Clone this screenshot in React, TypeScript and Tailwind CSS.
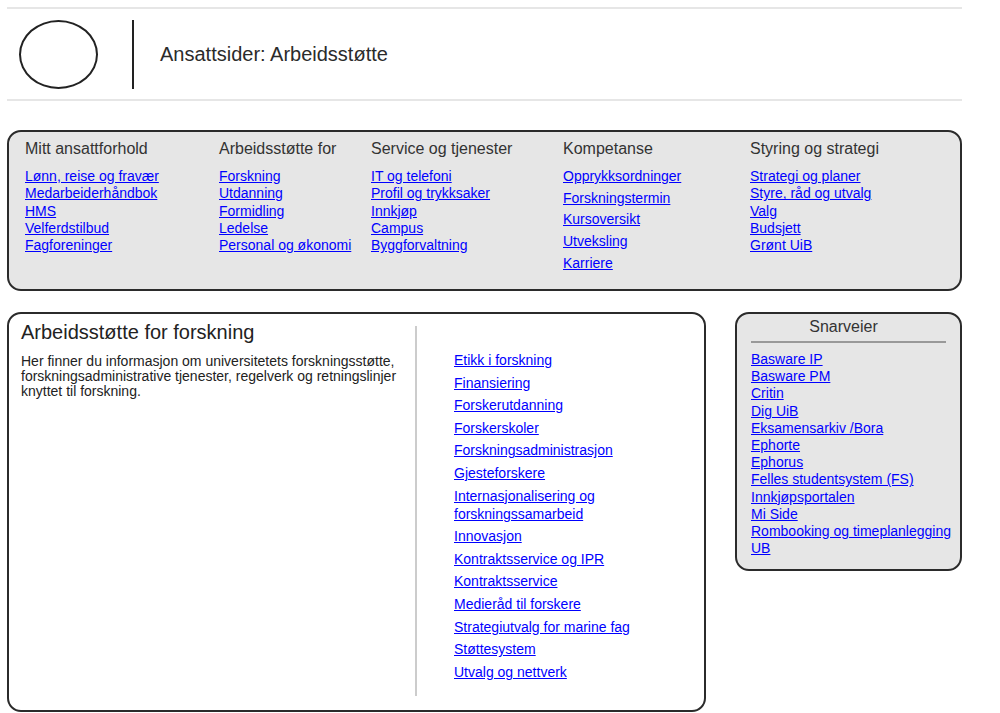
import React from "react"

const navColumns = [
  {
    title: "Mitt ansattforhold",
    spaced: false,
    links: ["Lønn, reise og fravær", "Medarbeiderhåndbok", "HMS", "Velferdstilbud", "Fagforeninger"],
  },
  {
    title: "Arbeidsstøtte for",
    spaced: false,
    links: ["Forskning", "Utdanning", "Formidling", "Ledelse", "Personal og økonomi"],
  },
  {
    title: "Service og tjenester",
    spaced: false,
    links: ["IT og telefoni", "Profil og trykksaker", "Innkjøp", "Campus", "Byggforvaltning"],
  },
  {
    title: "Kompetanse",
    spaced: true,
    links: ["Opprykksordninger", "Forskningstermin", "Kursoversikt", "Utveksling", "Karriere"],
  },
  {
    title: "Styring og strategi",
    spaced: false,
    links: ["Strategi og planer", "Styre, råd og utvalg", "Valg", "Budsjett", "Grønt UiB"],
  },
]

const researchLinks = [
  "Etikk i forskning",
  "Finansiering",
  "Forskerutdanning",
  "Forskerskoler",
  "Forskningsadministrasjon",
  "Gjesteforskere",
  "Internasjonalisering og forskningssamarbeid",
  "Innovasjon",
  "Kontraktsservice og IPR",
  "Kontraktsservice",
  "Medieråd til forskere",
  "Strategiutvalg for marine fag",
  "Støttesystem",
  "Utvalg og nettverk",
]

const shortcuts = [
  "Basware IP",
  "Basware PM",
  "Critin",
  "Dig UiB",
  "Eksamensarkiv /Bora",
  "Ephorte",
  "Ephorus",
  "Felles studentsystem (FS)",
  "Innkjøpsportalen",
  "Mi Side",
  "Rombooking og timeplanlegging",
  "UB",
]

function Link({ children }: { children: React.ReactNode }) {
  return (
    <a href="#" className="text-[#0000ff] underline underline-offset-[1px]">
      {children}
    </a>
  )
}

export default function App() {
  return (
    <div className="min-h-[713px] bg-white font-['Liberation_Sans',Arial,sans-serif] text-[#333]">
      <div className="ml-[7px] w-[955px] pt-[7px]">
        <header className="flex h-[94px] items-center border-y-2 border-[#e6e6e6]">
          <div className="ml-[12px] h-[69px] w-[79px] rounded-[50%] border-2 border-[#222]" />
          <div className="ml-[34px] h-[69px] w-[2px] bg-[#222]" />
          <h1 className="ml-[26px] text-[20px] leading-none text-[#2b2b2b]">Ansattsider: Arbeidsstøtte</h1>
        </header>

        <nav className="mt-[29px] h-[161px] rounded-[14px] border-2 border-[#2b2b2b] bg-[#e6e6e6] pl-[16px] pt-[8px]">
          <div className="grid grid-cols-[194px_152px_192px_187px_1fr]">
            {navColumns.map((col) => (
              <div key={col.title}>
                <h2 className="text-[16px] leading-[18px] text-[#333]">{col.title}</h2>
                <ul
                  className={
                    col.spaced
                      ? "mt-[10px] flex flex-col gap-[4.4px] text-[14px] leading-[17.3px]"
                      : "mt-[10px] flex flex-col text-[14px] leading-[17.3px]"
                  }
                >
                  {col.links.map((l) => (
                    <li key={l}>
                      <Link>{l}</Link>
                    </li>
                  ))}
                </ul>
              </div>
            ))}
          </div>
        </nav>

        <div className="mt-[21px] flex items-start gap-[29px]">
          <section className="flex h-[400px] w-[699px] rounded-[14px] border-2 border-[#2b2b2b] bg-white pl-[12px] pt-[7px]">
            <div className="w-[394px]">
              <h2 className="text-[20px] leading-[22px] text-[#222]">Arbeidsstøtte for forskning</h2>
              <p className="mt-[11px] text-[14px] leading-[15px] text-[#222]">
                Her finner du informasjon om universitetets forskningsstøtte, forskningsadministrative tjenester,
                regelverk og retningslinjer knyttet til forskning.
              </p>
            </div>
            <div className="mt-[5px] h-[370px] w-[2px] bg-[#cccccc]" />
            <ul className="ml-[37px] mt-[30px] flex w-[220px] flex-col gap-[4.6px] text-[14px] leading-[18px]">
              {researchLinks.map((l) => (
                <li key={l}>
                  <Link>{l}</Link>
                </li>
              ))}
            </ul>
          </section>

          <aside className="h-[259px] w-[227px] rounded-[14px] border-2 border-[#2b2b2b] bg-[#e6e6e6] px-[14px] pt-[4px]">
            <h2 className="pr-[10px] text-center text-[16px] leading-[18px] text-[#333]">Snarveier</h2>
            <div className="mt-[5px] h-[2px] w-[195px] bg-[#999]" />
            <ul className="mt-[8px] flex flex-col text-[14px] leading-[17.2px]">
              {shortcuts.map((l) => (
                <li key={l} className="whitespace-nowrap">
                  <Link>{l}</Link>
                </li>
              ))}
            </ul>
          </aside>
        </div>
      </div>
    </div>
  )
}
